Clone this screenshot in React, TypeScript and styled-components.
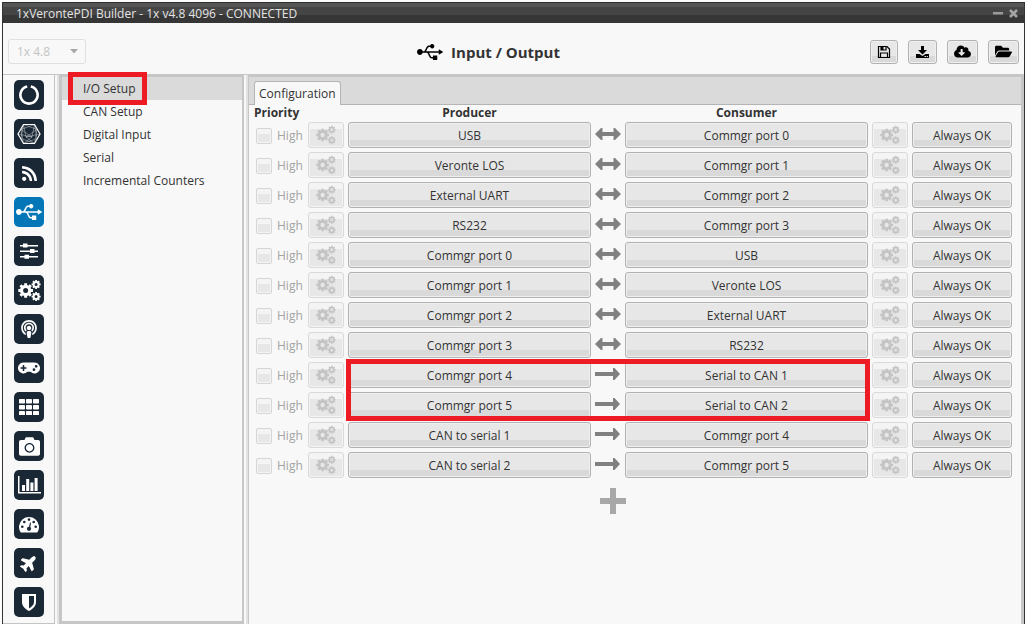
import React from 'react';
import styled, { createGlobalStyle } from 'styled-components';
import {
  FaUsb,
  FaRss,
  FaPodcast,
  FaGamepad,
  FaCamera,
  FaPlane,
  FaFolderOpen,
  FaCloudDownloadAlt,
} from 'react-icons/fa';

const GlobalStyle = createGlobalStyle`
  * { box-sizing: border-box; }
  body {
    margin: 0;
    background: #fdfdfd;
    color: #333;
    font: 12px/16px "Open Sans", "Noto Sans", sans-serif;
  }
  button, select, input { font: inherit; color: inherit; }
`;

const Window = styled.div`
  display: flex;
  flex-direction: column;
  min-height: calc(100vh - 2px);
  margin: 2px 2px 0;
  border: solid #333;
  border-width: 0 1px;
  background: #f8f8f8;
`;

const TitleBar = styled.header`
  display: flex;
  align-items: center;
  height: 21px;
  padding: 2px 4px 0 13px;
  background: linear-gradient(#2e2e2e 0 1px, #555 1px 5px, #454545 5px 13px, #363636 13px);
  color: #e4e4e4;
`;

const WindowTitle = styled.span`
  flex: 1;
  font-size: 12px;
`;

const WindowControl = styled.button`
  display: flex;
  padding: 0;
  margin-left: 4px;
  border: 0;
  background: none;
`;

const Toolbar = styled.div`
  display: flex;
  align-items: center;
  height: 51px;
  padding: 6px 5px 0;
`;

const VersionBox = styled.div`
  position: relative;
  width: 78px;
  color: #c4c4c4;

  svg { position: absolute; right: 8px; top: 10px; pointer-events: none; }
`;

const VersionSelect = styled.select`
  appearance: none;
  width: 100%;
  height: 25px;
  padding: 0 8px;
  border: 1px solid #e0e0e0;
  border-radius: 3px;
  background: #f8f8f8;
  opacity: 1;
`;

const PageTitle = styled.h1`
  display: flex;
  flex: 1;
  align-items: center;
  justify-content: center;
  gap: 8px;
  margin: 0;
  padding-left: 21px;
  font-size: 15px;
  line-height: 20px;
  font-weight: 700;

  svg { color: #000; }
`;

const ToolGroup = styled.div`
  display: flex;
  gap: 10px;
`;

const Button = styled.button`
  display: flex;
  align-items: center;
  justify-content: center;
  width: 100%;
  height: 26px;
  padding: 2px 6px 0;
  border: 1px solid #b2b2b2;
  border-radius: 3px;
  background: linear-gradient(#e7e7e7 70%, #d9d9d9 70%);
  box-shadow: inset 0 0 0 1px #efefef;
  color: #333;
`;

const ToolButton = styled(Button)`
  width: auto;
  height: 24px;
  padding: 0 6px;
  color: #000;
`;

const GearButton = styled(Button)`
  padding: 0 6px 1px;
  border-color: #d9d9d9;
  background: linear-gradient(#f4f4f4 25%, #e7e7e7 25%);
  box-shadow: inset 0 0 0 1px #f4f4f4;
  color: #c4c4c4;
`;

const Body = styled.div`
  display: flex;
  flex: 1;
`;

const Rail = styled.nav`
  display: flex;
  flex-direction: column;
  gap: 9px;
  width: 52px;
  padding: 5px 10px 4px 11px;
  border: 1px solid #c4c4c4;
  border-left-width: 0;
`;

const RailButton = styled.button<{ $active?: boolean }>`
  display: flex;
  align-items: center;
  justify-content: center;
  width: 30px;
  height: 30px;
  padding: 0;
  border: 0;
  border-radius: 5px;
  background: ${(p) => (p.$active ? '#0276b6' : '#1a2835')};
  color: #fff;
`;

const Splitter = styled.div`
  width: 4px;
  border-top: 1px solid #c8c8c8;
  background: linear-gradient(90deg, #f8f8f8 50%, #e2e2e2 50%);
`;

const Sections = styled.nav`
  position: relative;
  width: 185px;
  border: solid #c6c6c6;
  border-width: 3px 2px 3px 3px;
`;

const SectionLink = styled.a<{ $active?: boolean }>`
  display: block;
  height: 23px;
  padding: 0 21px;
  line-height: 23px;
  background: ${(p) => (p.$active ? '#dadada' : 'transparent')};
  color: #333;
  text-decoration: none;
`;

const Highlight = styled.div`
  position: absolute;
  border: 5px solid #ed1c24;
  pointer-events: none;
`;

const SectionHighlight = styled(Highlight)`
  top: -5px;
  left: 6px;
  width: 79px;
  height: 33px;
`;

const RowsHighlight = styled(Highlight)`
  top: 254px;
  left: 92px;
  right: 142px;
  height: 62px;
`;

const Pane = styled.main`
  flex: 1;
  border: solid #c6c6c6;
  border-width: 3px 3px 0 1px;
`;

const TabStrip = styled.div`
  display: flex;
  align-items: flex-end;
  height: 28px;
  padding-left: 5px;
  border-bottom: 1px solid #b4b4b4;
  background: #dadada;
`;

const Tab = styled.button`
  height: 24px;
  margin-bottom: -1px;
  padding: 1px 4px 0;
  border: 1px solid #b4b4b4;
  border-bottom: 0;
  border-radius: 3px 3px 0 0;
  background: #f8f8f8;
`;

const TabPanel = styled.div`
  padding: 0 9px 0 5px;
`;

const TableArea = styled.div`
  position: relative;
`;

const Table = styled.table`
  width: 100%;
  table-layout: fixed;
  border-collapse: collapse;
`;

const Column = styled.col<{ $width?: number }>`
  width: ${(p) => (p.$width ? `${p.$width}px` : 'auto')};
`;

const Heading = styled.th<{ $start?: boolean }>`
  height: 15px;
  padding: 1px 0 0;
  line-height: 14px;
  font-weight: 700;
  text-align: ${(p) => (p.$start ? 'left' : 'center')};
`;

const Cell = styled.td<{ $pad?: string }>`
  height: 30px;
  padding: ${(p) => p.$pad || '2px 0'};
`;

const Center = styled.div`
  display: flex;
  justify-content: center;
`;

const Priority = styled.label`
  display: flex;
  align-items: center;
  gap: 5px;
  padding: 2px 0 0 2px;
  color: #a4a4a4;
`;

const PriorityBox = styled.input`
  appearance: none;
  width: 16px;
  height: 16px;
  margin: 0;
  border: 1px solid #d6d6d6;
  border-radius: 2px;
  background: linear-gradient(#f4f4f4 35%, #e7e7e7 35%);
  box-shadow: inset 0 0 0 1px #f4f4f4;
`;

const AddCell = styled.td`
  padding: 8px 0 0;
`;

const AddButton = styled.button`
  display: flex;
  width: 26px;
  margin-left: 9px;
  padding: 0;
  border: 0;
  background: none;
`;

const Gear = ({ x, y, r }: { x: number; y: number; r: number }) => (
  <g transform={`translate(${x} ${y}) scale(${r / 7})`} fill="none" stroke="currentColor">
    <circle r="3.9" strokeWidth="3" />
    {[0, 45, 90, 135].map((angle) => (
      <path key={angle} d="M0-7v2.500M0 7V4.500" strokeWidth="2.800" transform={`rotate(${angle})`} />
    ))}
  </g>
);

const GearsIcon = ({ width }: { width: number }) => (
  <svg width={width} height={width} viewBox="0 0 22 22">
    <Gear x={7.3} y={11} r={7} />
    <Gear x={17.3} y={5.2} r={4.3} />
    <Gear x={17.3} y={16.8} r={4.3} />
  </svg>
);

const RingIcon = () => (
  <svg width="22" height="22" viewBox="0 0 22 22" fill="none" stroke="#fff" strokeWidth="2.600">
    <path d="M9.200 2.600a8.600 8.600 0 1 0 3.600 0" />
  </svg>
);

const MeshIcon = () => (
  <svg width="24" height="22" viewBox="0 0 24 22" fill="none" stroke="#fff">
    <path d="M6.500 1.500h11L23 11l-5.500 9.500h-11L1 11z" strokeWidth="1.200" />
    <path
      d="M6.500 1.500 20 6.500 17.500 20.500 4 15.500zM17.500 1.500 4 6.500 6.500 20.500 20 15.500zM6.500 1.500 9 14 23 11M17.500 1.500 15 14 1 11M4 6.500 15 14 6.500 20.500M20 6.500 9 14 17.500 20.500"
      strokeWidth="0.500"
      opacity="0.700"
    />
  </svg>
);

const SlidersIcon = () => (
  <svg width="18" height="18" viewBox="0 0 18 18" fill="#fff">
    <path d="M0 3h18v1.500H0zM0 8.500h18V10H0zM0 14h18v1.500H0z" />
    <path d="M3 1.500h4.500v4H3zM10 7h4.500v4H10zM4.500 12.700H9v4H4.500z" />
  </svg>
);

const GridIcon = () => (
  <svg width="20" height="16" viewBox="0 0 20 16" fill="#fff">
    {[0, 7, 14].map((x) =>
      [0, 6, 12].map((y) => <rect key={`${x}-${y}`} x={x} y={y} width="6" height="4.500" rx="0.800" />),
    )}
  </svg>
);

const ChartIcon = () => (
  <svg width="24" height="20" viewBox="0 0 24 20" fill="#fff">
    <path d="M1 1h1.500v16H24v1.500H1zM5 10h3v6H5zM9.200 4h3v12h-3zM13.400 7.500h3V16h-3zM17.600 3h3v13h-3z" />
  </svg>
);

const GaugeIcon = () => (
  <svg width="20" height="17" viewBox="0 0 20 17">
    <path d="M1.700 16.500A10 10 0 1 1 18.300 16.500z" fill="#fff" />
    <g fill="#1a2835">
      <circle cx="3.300" cy="10.800" r="1.300" />
      <circle cx="5.300" cy="6" r="1.300" />
      <circle cx="10" cy="3.600" r="1.300" />
      <circle cx="14.700" cy="6" r="1.300" />
      <circle cx="16.700" cy="10.800" r="1.300" />
      <circle cx="10" cy="12.800" r="2.100" />
      <path d="M11 6.500l1 .3L11 13H9.500z" />
    </g>
  </svg>
);

const ShieldIcon = () => (
  <svg width="16" height="19" viewBox="0 0 16 19">
    <path fill="#fff" fillRule="evenodd" d="M1 1h14v8c0 4-3 7-7 9-4-2-7-5-7-9zm7 2v12.500c3-1.800 5-3.800 5-6.500V3z" />
  </svg>
);

const SaveIcon = () => (
  <svg width="14" height="14" viewBox="0 0 14 14" fill="none" stroke="#000" strokeWidth="1.200">
    <path d="M1.500 1.500h8.500l2.500 2.500v8.500h-11z" />
    <path d="M3.500 12.500v-4.500h7v4.500M4 1.500v3.500h5v-3.500" />
    <path d="M4 1.500h2.500v3.500H4z" fill="#000" stroke="none" />
  </svg>
);

const DownloadIcon = () => (
  <svg width="15" height="14" viewBox="0 0 15 14">
    <path d="M6 1h3v4h3L7.500 9.500 3 5h3z" />
    <path d="M1 9h3.500l3 2 3-2H14v4H1zM9.500 11v1H11v-1zm2.200 0v1h1.300v-1z" fillRule="evenodd" />
  </svg>
);

const BothWaysIcon = () => (
  <svg width="28" height="14" viewBox="0 0 28 14" fill="#808080">
    <path d="M1 6 7 0h1.500v4h11V0H21l6 6-6 6h-1.500V8h-11v4H7z" />
  </svg>
);

const OneWayIcon = () => (
  <svg width="28" height="14" viewBox="0 0 28 14" fill="#808080">
    <path d="M1 4h18V0h1.500L26 6l-5.500 6H19V8H1z" />
  </svg>
);

const railItems = [
  { name: 'Veronte', icon: <RingIcon /> },
  { name: 'Mesh', icon: <MeshIcon /> },
  { name: 'Sensors', icon: <FaRss size={17} /> },
  { name: 'Input / Output', icon: <FaUsb size={26} />, active: true },
  { name: 'Control', icon: <SlidersIcon /> },
  { name: 'Automations', icon: <GearsIcon width={23} /> },
  { name: 'Communications', icon: <FaPodcast size={18} /> },
  { name: 'Stick', icon: <FaGamepad size={22} /> },
  { name: 'Variables', icon: <GridIcon /> },
  { name: 'Camera', icon: <FaCamera size={21} /> },
  { name: 'Telemetry', icon: <ChartIcon /> },
  { name: 'Panel', icon: <GaugeIcon /> },
  { name: 'Flight', icon: <FaPlane size={18} transform="rotate(-45)" /> },
  { name: 'Safety', icon: <ShieldIcon /> },
];

const sections = ['I/O Setup', 'CAN Setup', 'Digital Input', 'Serial', 'Incremental Counters'];

const links = [
  { producer: 'USB', consumer: 'Commgr port 0', both: true },
  { producer: 'Veronte LOS', consumer: 'Commgr port 1', both: true },
  { producer: 'External UART', consumer: 'Commgr port 2', both: true },
  { producer: 'RS232', consumer: 'Commgr port 3', both: true },
  { producer: 'Commgr port 0', consumer: 'USB', both: true },
  { producer: 'Commgr port 1', consumer: 'Veronte LOS', both: true },
  { producer: 'Commgr port 2', consumer: 'External UART', both: true },
  { producer: 'Commgr port 3', consumer: 'RS232', both: true },
  { producer: 'Commgr port 4', consumer: 'Serial to CAN 1', both: false },
  { producer: 'Commgr port 5', consumer: 'Serial to CAN 2', both: false },
  { producer: 'CAN to serial 1', consumer: 'Commgr port 4', both: false },
  { producer: 'CAN to serial 2', consumer: 'Commgr port 5', both: false },
];

export default function App() {
  return (
    <>
      <GlobalStyle />
      <Window>
        <TitleBar>
          <WindowTitle>1xVerontePDI Builder - 1x v4.8 4096 - CONNECTED</WindowTitle>
          <WindowControl aria-label="Minimize">
            <svg width="12" height="12" viewBox="0 0 12 12">
              <path d="M1 4h10v2.500H1z" fill="#9a9a9a" />
            </svg>
          </WindowControl>
          <WindowControl aria-label="Close">
            <svg width="12" height="12" viewBox="0 0 12 12">
              <path d="M2 2l7 7M9 2l-7 7" stroke="#a6a6a6" strokeWidth="2.500" />
            </svg>
          </WindowControl>
        </TitleBar>

        <Toolbar>
          <VersionBox>
            <VersionSelect aria-label="Version" disabled defaultValue="1x 4.8">
              <option>1x 4.8</option>
            </VersionSelect>
            <svg width="8" height="5" viewBox="0 0 8 5">
              <path d="M0 0h8L4 4.500z" fill="#a8a8a8" />
            </svg>
          </VersionBox>
          <PageTitle>
            <FaUsb size={26} />
            Input / Output
          </PageTitle>
          <ToolGroup>
            <ToolButton aria-label="Save">
              <SaveIcon />
            </ToolButton>
            <ToolButton aria-label="Download">
              <DownloadIcon />
            </ToolButton>
            <ToolButton aria-label="Download from cloud">
              <FaCloudDownloadAlt size={17} />
            </ToolButton>
            <ToolButton aria-label="Open">
              <FaFolderOpen size={17} />
            </ToolButton>
          </ToolGroup>
        </Toolbar>

        <Body>
          <Rail aria-label="Modules">
            {railItems.map((item) => (
              <RailButton key={item.name} aria-label={item.name} $active={item.active}>
                {item.icon}
              </RailButton>
            ))}
          </Rail>
          <Splitter />
          <Sections aria-label="Sections">
            {sections.map((name, i) => (
              <SectionLink key={name} href="#" $active={i === 0}>
                {name}
              </SectionLink>
            ))}
            <SectionHighlight />
          </Sections>
          <Splitter />
          <Pane>
            <TabStrip role="tablist">
              <Tab role="tab" aria-selected="true">
                Configuration
              </Tab>
            </TabStrip>
            <TabPanel role="tabpanel">
              <TableArea>
                <Table>
                  <colgroup>
                    <Column $width={54} />
                    <Column $width={40} />
                    <Column />
                    <Column $width={34} />
                    <Column />
                    <Column $width={44} />
                    <Column $width={100} />
                  </colgroup>
                  <thead>
                    <tr>
                      <Heading $start>Priority</Heading>
                      <Heading />
                      <Heading>Producer</Heading>
                      <Heading />
                      <Heading>Consumer</Heading>
                      <Heading />
                      <Heading />
                    </tr>
                  </thead>
                  <tbody>
                    {links.map((link, i) => (
                      <tr key={i}>
                        <Cell>
                          <Priority>
                            <PriorityBox type="checkbox" disabled />
                            High
                          </Priority>
                        </Cell>
                        <Cell $pad="2px 4px 2px 0">
                          <GearButton disabled aria-label="Producer settings">
                            <GearsIcon width={20} />
                          </GearButton>
                        </Cell>
                        <Cell>
                          <Button>{link.producer}</Button>
                        </Cell>
                        <Cell>
                          <Center>{link.both ? <BothWaysIcon /> : <OneWayIcon />}</Center>
                        </Cell>
                        <Cell>
                          <Button>{link.consumer}</Button>
                        </Cell>
                        <Cell $pad="2px 4px">
                          <GearButton disabled aria-label="Consumer settings">
                            <GearsIcon width={20} />
                          </GearButton>
                        </Cell>
                        <Cell>
                          <Button>Always OK</Button>
                        </Cell>
                      </tr>
                    ))}
                  </tbody>
                  <tfoot>
                    <tr>
                      <AddCell colSpan={3} />
                      <AddCell>
                        <AddButton aria-label="Add connection">
                          <svg width="26" height="26" viewBox="0 0 26 26">
                            <path d="M10 0h6v10h10v6H16v10h-6V16H0v-6h10z" fill="#a8a8a8" />
                          </svg>
                        </AddButton>
                      </AddCell>
                      <AddCell colSpan={3} />
                    </tr>
                  </tfoot>
                </Table>
                <RowsHighlight />
              </TableArea>
            </TabPanel>
          </Pane>
        </Body>
      </Window>
    </>
  );
}
